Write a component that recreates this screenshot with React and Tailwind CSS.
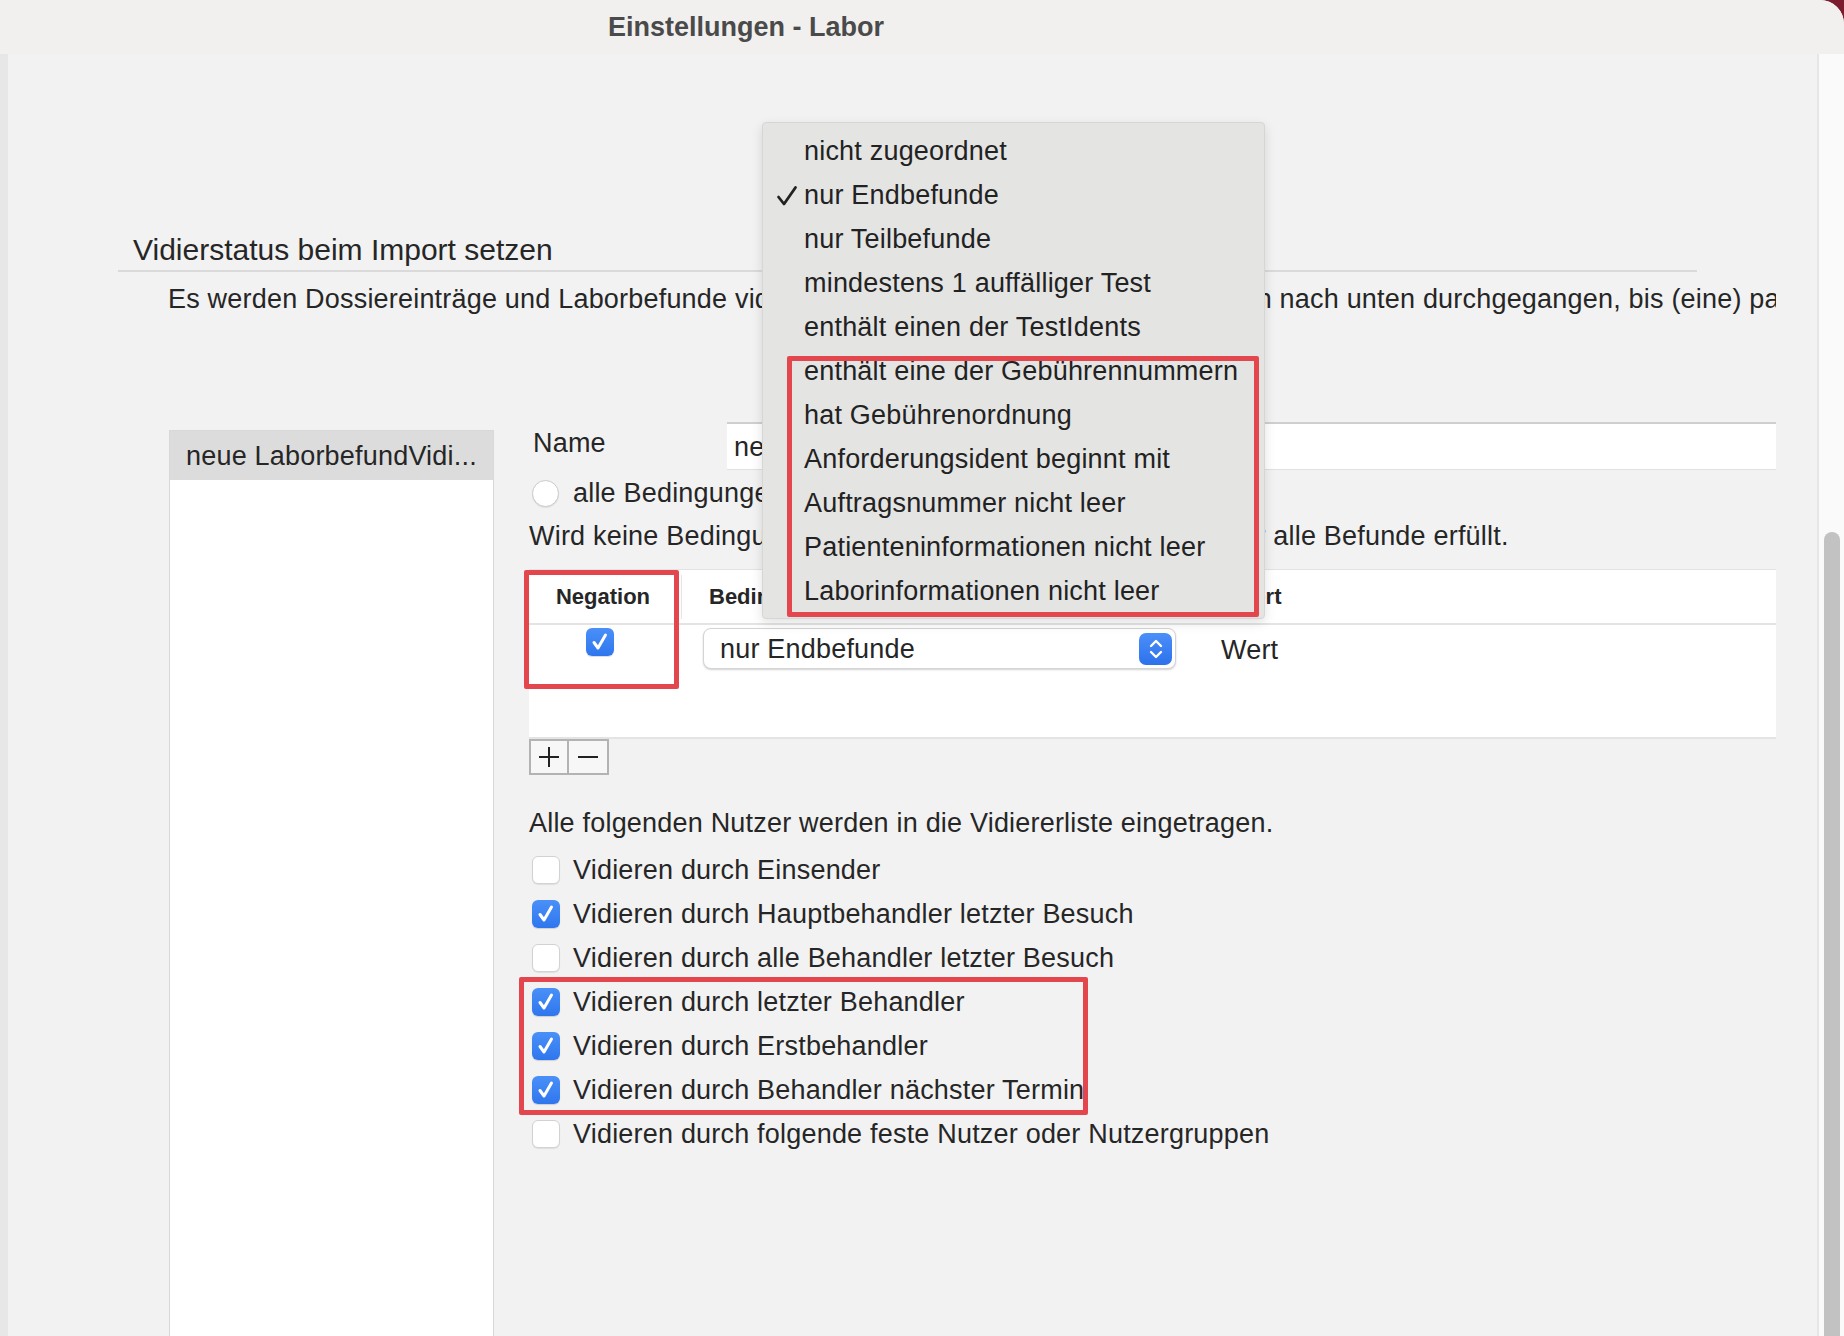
import React from "react";

const menuItems = [
  "nicht zugeordnet",
  "nur Endbefunde",
  "nur Teilbefunde",
  "mindestens 1 auffälliger Test",
  "enthält einen der TestIdents",
  "enthält eine der Gebührennummern",
  "hat Gebührenordnung",
  "Anforderungsident beginnt mit",
  "Auftragsnummer nicht leer",
  "Patienteninformationen nicht leer",
  "Laborinformationen nicht leer",
];

const checks = [
  ["Vidieren durch Einsender", false],
  ["Vidieren durch Hauptbehandler letzter Besuch", true],
  ["Vidieren durch alle Behandler letzter Besuch", false],
  ["Vidieren durch letzter Behandler", true],
  ["Vidieren durch Erstbehandler", true],
  ["Vidieren durch Behandler nächster Termin", true],
  ["Vidieren durch folgende feste Nutzer oder Nutzergruppen", false],
];

function CheckBox({ checked }) {
  if (checked) {
    return (
      <div className="w-[28px] h-[28px] rounded-[6px] bg-gradient-to-b from-[#4a90f8] to-[#2f76ee] flex items-center justify-center shrink-0 shadow-[0_1px_1px_rgba(0,0,0,0.15)]">
        <svg width="22" height="22" viewBox="0 0 22 22">
          <path d="M5 11.5 L9 17 L16.5 4" fill="none" stroke="#fff" strokeWidth="3" strokeLinecap="round" strokeLinejoin="round" />
        </svg>
      </div>
    );
  }
  return (
    <div className="w-[28px] h-[28px] rounded-[6px] bg-white border border-[#d2d2d2] shrink-0 shadow-[0_1px_1px_rgba(0,0,0,0.08)]" />
  );
}

function CheckRow({ label, checked }) {
  return (
    <div className="h-[44px] flex items-center pl-[3px] gap-[13px]">
      <CheckBox checked={checked} />
      <span className="whitespace-nowrap">{label}</span>
    </div>
  );
}

export default function App() {
  return (
    <div className="w-[1844px] h-[1336px] bg-[#7a1b2e] overflow-hidden font-['Liberation_Sans',Arial,sans-serif] text-[#262626] text-[27px] tracking-[0.2px] leading-[30px] relative">
      <div className="w-full h-full rounded-tr-[24px] overflow-hidden flex flex-col bg-[#f2f2f2]">
        {/* title bar */}
        <div className="h-[54px] shrink-0 bg-[#f1f0ee] flex items-center pl-[608px]">
          <span className="font-bold text-[27px] tracking-normal text-[#4a4a4a]">Einstellungen - Labor</span>
        </div>
        <div className="flex-1 flex min-h-0">
          <div className="w-[8px] bg-[#e7e7e7] shrink-0" />
          {/* main content */}
          <div className="flex-1 bg-[#f2f2f2] pt-[181px] overflow-hidden">
            <div className="pl-[125px] h-[30px] whitespace-nowrap text-[30px] tracking-normal">Vidierstatus beim Import setzen</div>
            <div className="ml-[110px] w-[1579px] h-[2px] bg-[#dadada] mt-[5px]" />
            <div className="ml-[160px] w-[1608px] mt-[12px] h-[30px] overflow-hidden whitespace-nowrap">
              Es werden Dossiereinträge und Laborbefunde vidiert. Die Regeln werden einzeln von oben nach unten durchgegangen, bis (eine) passende Regel gefunden wurde.
            </div>
            <div className="flex mt-[108px]">
              {/* left list */}
              <div className="ml-[161px] mt-[8px] w-[325px] h-[940px] bg-white border border-[#d8d8d8] shrink-0">
                <div className="h-[49px] bg-[#dcdcdc] flex items-center pl-[16px] whitespace-nowrap">neue LaborbefundVidi...</div>
              </div>
              {/* form */}
              <div className="ml-[35px] w-[1247px] shrink-0">
                <div className="h-[48px] flex items-center">
                  <div className="w-[198px] pl-[4px] -mt-[6px]">Name</div>
                  <div className="flex-1 h-[48px] bg-white border-t-2 border-t-[#cfcfcf] border-b border-b-[#e0e0e0] flex items-center pl-[7px] whitespace-nowrap overflow-hidden">
                    neue LaborbefundVidierung
                  </div>
                </div>
                <div className="h-[46px] flex items-center gap-[14px] pl-[3px]">
                  <div className="w-[27px] h-[27px] rounded-full bg-white border border-[#cacaca] shadow-[0_1px_1px_rgba(0,0,0,0.08)]" />
                  <span className="whitespace-nowrap">alle Bedingungen müssen erfüllt sein</span>
                </div>
                <div className="h-[40px] flex items-center whitespace-nowrap">
                  Wird keine Bedingung angegeben, ist die Regel pauschal für alle Befunde erfüllt.
                </div>
                {/* table */}
                <div className="mt-[13px] relative">
                  <div className="bg-white border-t border-[#e2e2e2]">
                    <div className="h-[55px] flex items-center border-b-2 border-[#e4e4e4] font-bold text-[22px] tracking-normal">
                      <div className="w-[146px] pl-[2px] text-center">Negation</div>
                      <div className="w-[1px] h-[44px] bg-[#e6e6e6] ml-[6px]" />
                      <div className="w-[542px] pl-[27px]">Bedingung</div>
                      <div className="pl-[9px]">Wert</div>
                    </div>
                    <div className="h-[114px] flex items-start border-b-2 border-[#e4e4e4]">
                      <div className="w-[146px] flex justify-center pt-[3px] pr-[5px]">
                        <CheckBox checked={true} />
                      </div>
                      <div className="ml-[28px] mt-[3px] w-[473px] h-[41px] rounded-[8px] bg-white border border-[#d4d4d4] shadow-[0_1px_2px_rgba(0,0,0,0.18)] flex items-center justify-between pl-[16px] pr-[3px]">
                        <span>nur Endbefunde</span>
                        <div className="w-[33px] h-[32px] rounded-[7px] bg-gradient-to-b from-[#4b8ff9] to-[#2d71ec] flex items-center justify-center">
                          <svg width="16" height="24" viewBox="0 0 16 24">
                            <path d="M3 9 L8 4 L13 9" fill="none" stroke="#fff" strokeWidth="2.4" strokeLinecap="round" strokeLinejoin="round" />
                            <path d="M3 15 L8 20 L13 15" fill="none" stroke="#fff" strokeWidth="2.4" strokeLinecap="round" strokeLinejoin="round" />
                          </svg>
                        </div>
                      </div>
                      <div className="ml-[45px] mt-[10px]">Wert</div>
                    </div>
                  </div>
                  <div className="absolute left-[-5px] top-[1px] w-[155px] h-[119px] border-[5px] border-[#e3474d] rounded-[2px]" />
                </div>
                <div className="flex">
                  <div className="w-[40px] h-[36px] border-2 border-[#b3b3b3] bg-[#f7f7f7] flex items-center justify-center">
                    <svg width="22" height="22" viewBox="0 0 22 22"><path d="M11 1 V21 M1 11 H21" stroke="#222" strokeWidth="2" /></svg>
                  </div>
                  <div className="w-[40px] h-[36px] border-2 border-l-0 border-[#b3b3b3] bg-[#f7f7f7] flex items-center justify-center">
                    <svg width="22" height="22" viewBox="0 0 22 22"><path d="M1 11 H21" stroke="#222" strokeWidth="2" /></svg>
                  </div>
                </div>
                <div className="h-[40px] mt-[28px] flex items-center whitespace-nowrap">
                  Alle folgenden Nutzer werden in die Vidiererliste eingetragen.
                </div>
                <div className="mt-[5px]">
                  {checks.slice(0, 3).map(([l, c]) => (
                    <CheckRow key={l} label={l} checked={c} />
                  ))}
                  <div className="relative">
                    {checks.slice(3, 6).map(([l, c]) => (
                      <CheckRow key={l} label={l} checked={c} />
                    ))}
                    <div className="absolute left-[-10px] top-[-3px] w-[569px] h-[138px] border-[5px] border-[#e3474d] rounded-[2px]" />
                  </div>
                  {checks.slice(6).map(([l, c]) => (
                    <CheckRow key={l} label={l} checked={c} />
                  ))}
                </div>
              </div>
            </div>
          </div>
          {/* scrollbar */}
          <div className="w-[27px] shrink-0 border-l-2 border-[#e6e6e6] bg-[#fafafa] pt-[478px] pl-[5px]">
            <div className="w-[16px] h-[900px] rounded-full bg-[#c2c2c2]" />
          </div>
        </div>
      </div>

      {/* dropdown menu overlay */}
      <div className="absolute left-[762px] top-[122px] w-[503px] h-[497px] bg-[#e4e4e2] border border-[#d6d6d4] rounded-[4px] shadow-[0_4px_12px_rgba(0,0,0,0.12)] pt-[6px]">
        {menuItems.map((it, i) => (
          <div key={it} className="h-[44px] flex items-center relative pl-[41px] whitespace-nowrap text-[#222]">
            {i === 1 && (
              <svg className="absolute left-[13px] top-[12px]" width="22" height="22" viewBox="0 0 22 22">
                <path d="M2.5 12 L8 19 L19.5 2.5" fill="none" stroke="#222" strokeWidth="2.8" strokeLinecap="round" strokeLinejoin="round" />
              </svg>
            )}
            {it}
          </div>
        ))}
        <div className="absolute left-[24px] top-[233px] w-[472px] h-[261px] border-[5px] border-[#e3474d] rounded-[2px]" />
      </div>
    </div>
  );
}
